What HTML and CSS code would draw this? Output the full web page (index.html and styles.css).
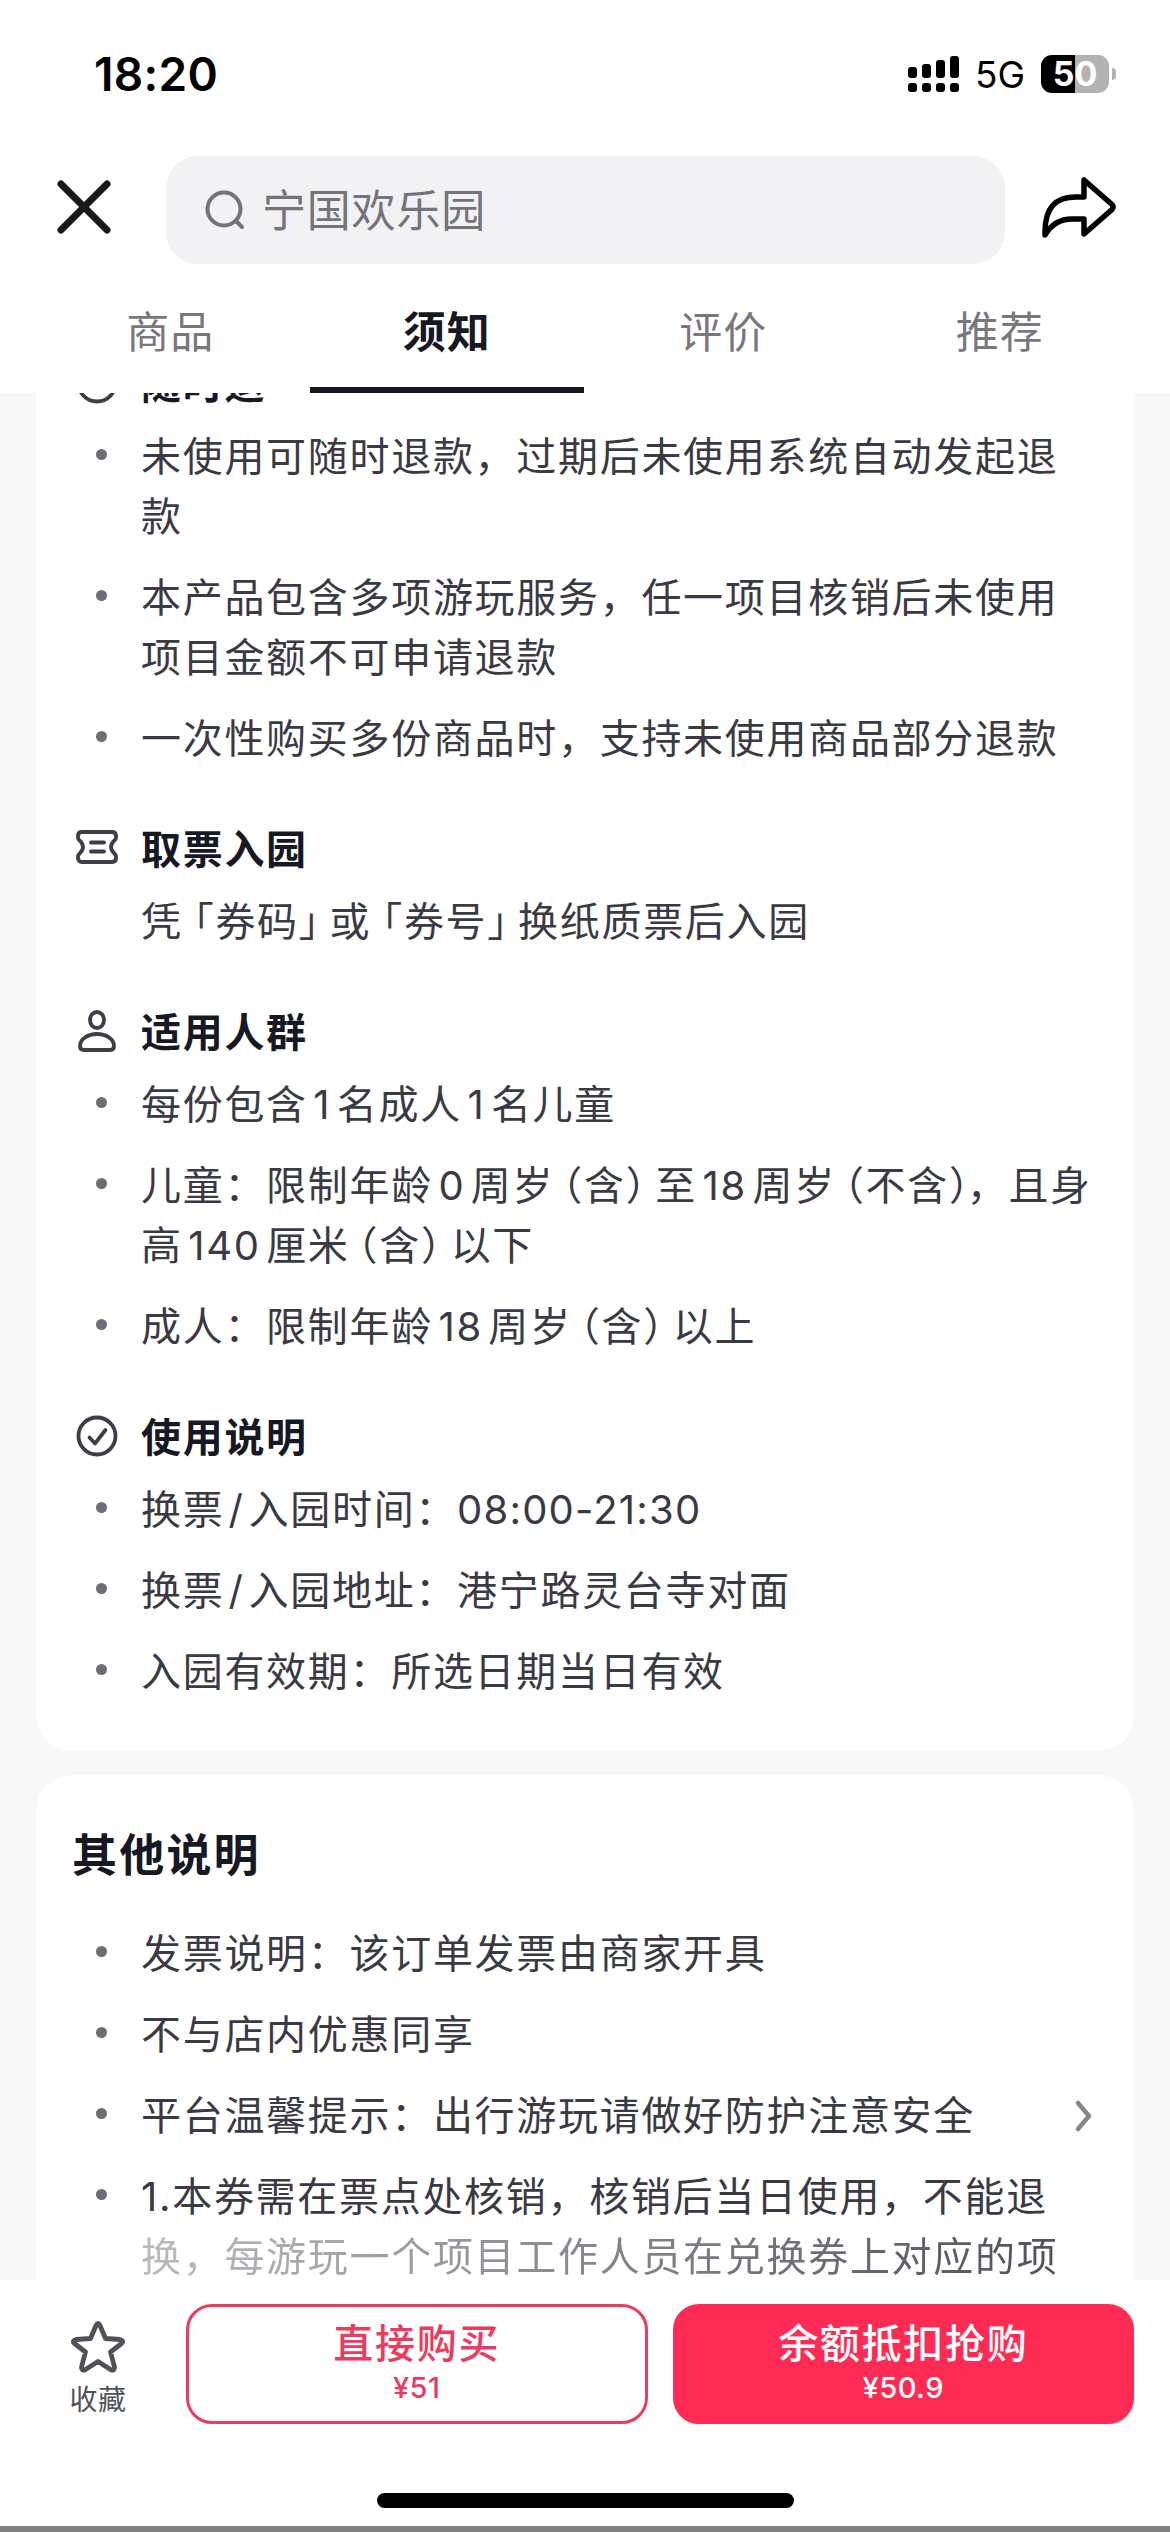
FILE: index.html
```html
<!DOCTYPE html>
<html lang="zh-CN">
<head>
    <meta charset="UTF-8">
    <meta name="viewport" content="width=device-width, initial-scale=1.0">
    <title>宁国欢乐园</title>
    <link rel="stylesheet" href="styles.css">
</head>
<body>
    <div class="header">
        <div class="status-bar">
            <span class="time">18:20</span>
            <svg class="signal" width="51" height="36" viewBox="0 0 51 36">
                <rect x="0" y="11" width="9" height="11" rx="3"/>
                <rect x="14" y="8" width="9" height="14" rx="3"/>
                <rect x="28" y="4" width="9" height="18" rx="3"/>
                <rect x="42" y="0" width="9" height="22" rx="3"/>
                <rect x="0" y="27" width="9" height="9" rx="3"/>
                <rect x="14" y="27" width="9" height="9" rx="3"/>
                <rect x="28" y="27" width="9" height="9" rx="3"/>
                <rect x="42" y="27" width="9" height="9" rx="3"/>
            </svg>
            <span class="network">5G</span>
            <span class="battery">50</span>
            <span class="battery-cap"></span>
        </div>
        <div class="nav">
            <svg class="close" width="56" height="56" viewBox="0 0 56 56">
                <path d="M5 5L51 51M51 5L5 51"/>
            </svg>
            <div class="search">
                <svg class="search-icon" width="42" height="42" viewBox="0 0 42 42">
                    <circle cx="19" cy="19" r="16.5"/>
                    <path d="M31 31L37 37"/>
                </svg>
                <span>宁国欢乐园</span>
            </div>
            <svg class="share" width="78" height="64" viewBox="0 0 78 64">
                <path d="M45 5V22H37C17 22 6 32 6 57V60C13 48 22 44 33 44H45V59L73 34.5Q75 32 73 29.5Z"/>
            </svg>
        </div>
        <div class="tabs">
            <div class="tab">商品</div>
            <div class="tab active">须知</div>
            <div class="tab">评价</div>
            <div class="tab">推荐</div>
        </div>
    </div>

    <div class="content">
        <div class="card notice">
            <section>
                <h3>
                    <svg class="icon" width="44" height="44" viewBox="0 0 44 44"><circle cx="22" cy="22" r="18.5"/></svg>
                    随时退
                </h3>
                <ul>
                    <li>未使用可随时退款，过期后未使用系统自动发起退款</li>
                    <li>本产品包含多项游玩服务，任一项目核销后未使用项目金额不可申请退款</li>
                    <li>一次性购买多份商品时，支持未使用商品部分退款</li>
                </ul>
            </section>
            <section>
                <h3>
                    <svg class="icon" width="44" height="44" viewBox="0 0 44 44">
                        <path d="M7 6H37Q41 6 41 10V12C41 14.5 36 15.5 36 21S41 27.5 41 30V32Q41 36 37 36H7Q3 36 3 32V30C3 27.5 8 26.5 8 21S3 14.5 3 12V10Q3 6 7 6Z"/>
                        <path d="M16 16.5H29M16 25.5H29"/>
                    </svg>
                    取票入园
                </h3>
                <p>凭<i class="open">「</i>券码<i class="shut">」</i>或<i class="open">「</i>券号<i class="shut">」</i>换纸质票后入园</p>
            </section>
            <section>
                <h3>
                    <svg class="icon" width="44" height="44" viewBox="0 0 44 44">
                        <ellipse cx="22" cy="11" rx="7" ry="8"/>
                        <path d="M22 25C31 25 39 30 39 37Q39 41 35 41H9Q5 41 5 37C5 30 13 25 22 25Z"/>
                    </svg>
                    适用人群
                </h3>
                <ul>
                    <li>每份包含<b>1</b>名成人<b>1</b>名儿童</li>
                    <li class="wide">儿童：限制年龄<b>0</b>周岁<i class="paren-l">（</i>含<i class="paren-r">）</i>至<b>18</b>周岁<i class="paren-l">（</i>不含<i class="paren-end">）</i>，且身<br>高<b>140</b>厘米<i class="paren-l">（</i>含<i class="paren-r">）</i>以下</li>
                    <li>成人：限制年龄<b>18</b>周岁<i class="paren-l">（</i>含<i class="paren-r">）</i>以上</li>
                </ul>
            </section>
            <section>
                <h3>
                    <svg class="icon" width="44" height="44" viewBox="0 0 44 44">
                        <circle cx="22" cy="22" r="18.5"/>
                        <path d="M14.5 23.5L20 29.5L30.5 16"/>
                    </svg>
                    使用说明
                </h3>
                <ul>
                    <li>换票<b class="slash">/</b>入园时间：<span class="hours">08:00-21:30</span></li>
                    <li>换票<b class="slash">/</b>入园地址：港宁路灵台寺对面</li>
                    <li>入园有效期：所选日期当日有效</li>
                </ul>
            </section>
        </div>

        <div class="card other">
            <h2>其他说明</h2>
            <ul>
                <li>发票说明：该订单发票由商家开具</li>
                <li>不与店内优惠同享</li>
                <li class="link">
                    平台温馨提示：出行游玩请做好防护注意安全
                    <svg class="arrow" width="20" height="36" viewBox="0 0 20 36"><path d="M4 5L15 18L4 31"/></svg>
                </li>
                <li>1.本券需在票点处核销，核销后当日使用，不能退<br><span class="fade">换，每游玩一个项目工作人员在兑换券上对应的项</span></li>
            </ul>
        </div>
    </div>

    <div class="footer">
        <div class="actions">
            <div class="collect">
                <svg width="56" height="54" viewBox="0 0 56 54">
                    <path d="M26 5.5Q28 1.5 30 5.5L35.5 18.5L50 19.5Q54.5 20.5 51.5 23.5L40.5 32L44.5 47Q44.5 51.5 40.5 49.5L28 41.5L15.5 49.5Q11.5 51.5 11.5 47L15.5 32L4.5 23.5Q1.5 20.5 6 19.5L20.5 18.5Z"/>
                </svg>
                <span>收藏</span>
            </div>
            <button class="buy"><span>直接购买</span><small>¥51</small></button>
            <button class="buy primary"><span>余额抵扣抢购</span><small>¥50.9</small></button>
        </div>
        <div class="home-indicator"></div>
    </div>
</body>
</html>
```
FILE: styles.css
```css
* {
    box-sizing: border-box;
}
body {
    margin: 0;
    width: 1170px;
    height: 2532px;
    display: flex;
    flex-direction: column;
    overflow: hidden;
    background-color: #f8f8f8;
    font-family: Inter, "Noto Sans CJK SC", sans-serif;
    font-size: 40px;
    line-height: 60px;
    letter-spacing: 1.7px;
    color: #393a44;
    text-autospace: no-autospace;
    text-spacing-trim: space-all;
}
svg {
    display: block;
    fill: none;
    stroke-linecap: round;
    stroke-linejoin: round;
    flex-shrink: 0;
}
h2, h3, ul, p {
    margin: 0;
    padding: 0;
}

/* header */
.header {
    height: 393px;
    flex-shrink: 0;
    background-color: #fff;
}
.status-bar {
    height: 156px;
    padding: 0 54px 8px 94px;
    display: flex;
    align-items: center;
    color: #000;
    letter-spacing: 0;
}
.time {
    flex: 1;
    font-size: 46px;
    font-weight: 600;
    letter-spacing: 0.3px;
}
.signal {
    fill: #000;
}
.network {
    width: 50px;
    margin: 2px 16px 0;
    font-size: 37px;
}
.battery {
    width: 68px;
    height: 38px;
    border-radius: 11px;
    background: linear-gradient(to right, #000 50%, #b3b3b3 50%);
    color: #fff;
    font-size: 34px;
    font-weight: 700;
    line-height: 38px;
    text-align: center;
}
.battery-cap {
    width: 4px;
    height: 12px;
    margin-left: 3px;
    border-radius: 0 4px 4px 0;
    background-color: #b3b3b3;
}
.nav {
    height: 108px;
    padding: 0 53px 0 56px;
    display: flex;
    align-items: center;
}
.close {
    margin-bottom: 6px;
    stroke: rgba(0, 0, 0, 0.9);
    stroke-width: 7;
}
.search {
    width: 839px;
    height: 108px;
    margin-left: 54px;
    padding: 2px 0 0 39px;
    display: flex;
    align-items: center;
    border-radius: 32px;
    background-color: #f2f2f4;
    color: #737479;
    font-size: 44px;
    letter-spacing: 0.8px;
}
.search-icon {
    margin-right: 15px;
    stroke: #737479;
    stroke-width: 4;
}
.share {
    margin: 0 0 6px 34px;
    stroke: #000;
    stroke-width: 5.5;
}
.tabs {
    height: 129px;
    padding: 0 32px;
    display: flex;
}
.tab {
    flex: 1;
    display: flex;
    justify-content: center;
    padding-top: 38px;
    margin: 0 1px;
    color: #77787e;
    font-size: 43px;
    letter-spacing: 1px;
}
.tab.active {
    border-bottom: 6px solid #161823;
    color: #161823;
    font-weight: 600;
}

/* cards */
.content {
    flex: 1;
    min-height: 0;
    overflow: hidden;
    padding: 0 36px;
}
.card {
    border-radius: 36px;
    background-color: #fff;
}
.notice {
    margin-top: -92px;
    padding: 54px 36px 49px 39px;
    display: flex;
    flex-direction: column;
    gap: 51px;
}
h3 {
    display: flex;
    align-items: center;
    gap: 22px;
    margin-bottom: 12px;
    color: #161823;
    font-size: 40px;
    font-weight: 600;
}
.icon {
    margin-bottom: 5px;
    stroke: #3d3e47;
    stroke-width: 3.8;
}
p {
    padding-left: 66px;
}
ul {
    list-style: none;
    display: flex;
    flex-direction: column;
    gap: 21px;
}
li {
    position: relative;
    padding: 0 36px 0 66px;
}
.wide {
    padding-right: 0;
    white-space: nowrap;
}
li::before {
    content: "";
    position: absolute;
    left: 21px;
    top: 22px;
    width: 11px;
    height: 11px;
    border-radius: 50%;
    background-color: #6d6e75;
}
b {
    margin: 0 5.5px;
    font-weight: 400;
}
.slash {
    margin: 0 4px;
}
.hours {
    letter-spacing: 1.2px;
}
/* half-width brackets */
i {
    font-style: normal;
    font-feature-settings: "halt";
}
.open {
    margin-left: 11px;
}
.shut {
    margin-right: 9px;
}
.paren-l {
    margin-left: 8px;
}
.paren-r {
    margin-right: 8px;
}
.paren-end {
    margin-right: -4px;
}
.other {
    height: 700px;
    margin-top: 24px;
    padding: 51px 36px 0 39px;
}
h2 {
    margin: 0 0 38px -3px;
    color: #161823;
    font-size: 45px;
    font-weight: 600;
    letter-spacing: 2.2px;
}
.link {
    display: flex;
    justify-content: space-between;
    align-items: center;
    padding-right: 4px;
}
.arrow {
    stroke: #85868b;
    stroke-width: 4.5;
}
.fade {
    background: linear-gradient(100deg, #bbbbbf, #505159);
    background-clip: text;
    -webkit-background-clip: text;
    color: transparent;
}

/* footer */
.footer {
    height: 252px;
    flex-shrink: 0;
    padding: 24px 36px 0;
    background-color: #fff;
    border-bottom: 6px solid #808080;
}
.actions {
    height: 120px;
    display: flex;
}
.collect {
    width: 124px;
    margin-right: 26px;
    padding-top: 16px;
    display: flex;
    flex-direction: column;
    align-items: center;
    color: #50525a;
    font-size: 28px;
    line-height: 42px;
    letter-spacing: 0.5px;
}
.collect svg {
    stroke: #50525a;
    stroke-width: 4.8;
    margin-bottom: 5px;
}
.buy {
    flex: 1;
    display: flex;
    flex-direction: column;
    align-items: center;
    padding: 7px 0 0;
    border: 3px solid #e93c5e;
    border-radius: 26px;
    background-color: #fff;
    color: #e93c5e;
    font-family: inherit;
    font-size: 40px;
    font-weight: 500;
    line-height: 60px;
    letter-spacing: 1.7px;
}
.buy small {
    margin-top: -4px;
    font-size: 29px;
    line-height: 36px;
    letter-spacing: 0.5px;
}
.buy.primary {
    margin-left: 25px;
    border-color: #fe2c55;
    background-color: #fe2c55;
    color: #fff;
}
.home-indicator {
    width: 417px;
    height: 15px;
    margin: 69px auto 0;
    border-radius: 8px;
    background-color: #000;
}
```
